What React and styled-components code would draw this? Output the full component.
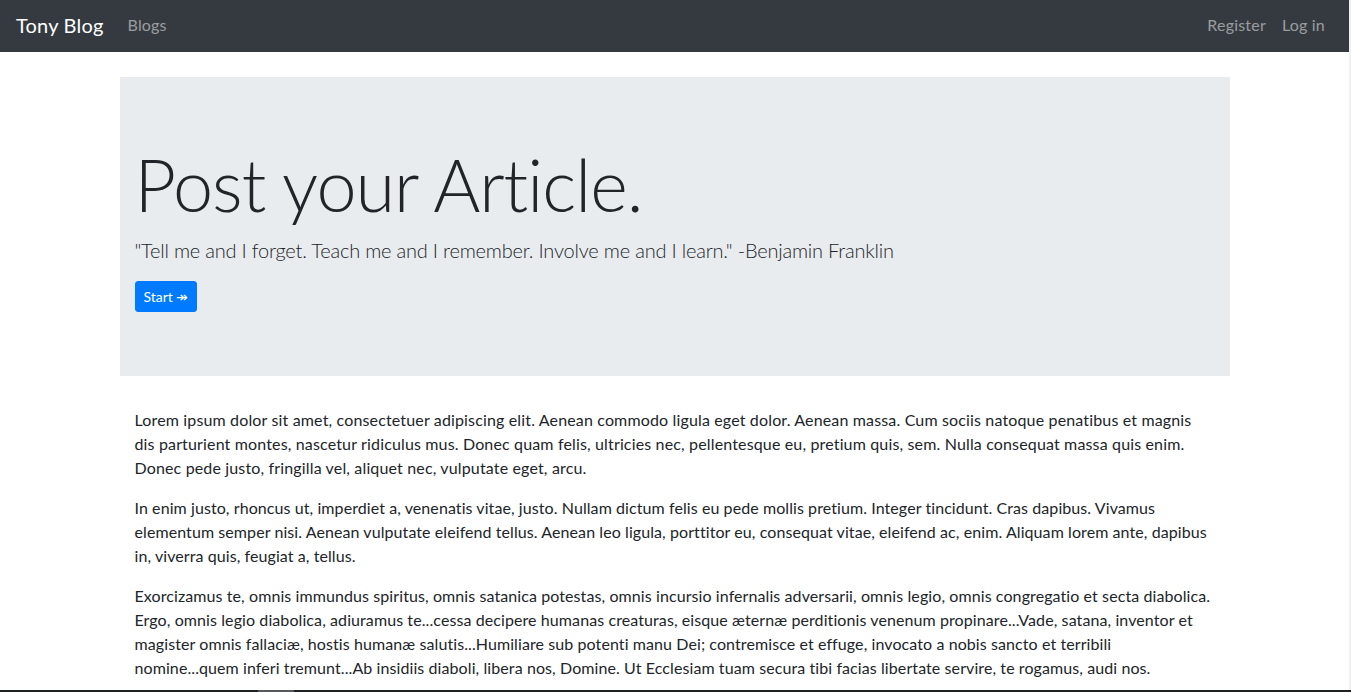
import React from "react";
import styled, { createGlobalStyle } from "styled-components";

const Global = createGlobalStyle`
  * { box-sizing: border-box; }
  html, body { margin: 0; padding: 0; background: #fff; }
  body {
    font-family: Lato, "Liberation Sans", sans-serif;
    font-size: 16px;
    line-height: 1.5;
    color: #212529;
    overflow: hidden;
  }
`;

const Page = styled.div`
  width: 1349px;
  min-height: 692px;
`;

const Navbar = styled.nav`
  height: 52px;
  background: #343a40;
  display: flex;
  align-items: center;
  justify-content: space-between;
  padding: 0 16px 3px;
`;

const NavGroup = styled.div`
  display: flex;
  align-items: center;
`;

const Brand = styled.a`
  color: #fff;
  font-size: 20px;
  line-height: 30px;
  margin-right: 16px;
  text-decoration: none;
  padding: 5px 0;
  letter-spacing: 0.2px;
`;

const NavLink = styled.a`
  color: rgba(255, 255, 255, 0.5);
  font-size: 16px;
  padding: 8px;
  text-decoration: none;
  letter-spacing: 0.2px;
`;

const Container = styled.main`
  width: 1140px;
  margin: 0 auto;
  padding: 25px 15px 0;
`;

const Jumbotron = styled.section`
  background: #e9ecef;
  padding: 64px 15px;
  margin-bottom: 32px;
`;

const Display = styled.h1`
  margin: 0 0 8px;
  font-size: 72px;
  font-weight: 300;
  line-height: 1.2;
  letter-spacing: -1px;
`;

const Lead = styled.p`
  margin: 0 0 16px;
  font-size: 20px;
  font-weight: 300;
  line-height: 30px;
  letter-spacing: -0.2px;
`;

const Button = styled.a`
  display: inline-flex;
  align-items: center;
  height: 31px;
  padding: 0 8px;
  background: #007bff;
  border: 1px solid #007bff;
  border-radius: 3px;
  color: #fff;
  font-size: 14px;
  text-decoration: none;
  vertical-align: top;
`;

const Article = styled.div`
  padding: 0 15px;
`;

const Para = styled.p`
  margin: 0 0 16px;
  font-size: 16px;
  line-height: 24px;
  letter-spacing: ${(p) => p.$tracking ?? 0.05}px;
`;

const EdgeStrip = styled.div`
  position: fixed;
  top: 0;
  right: 0;
  width: 2px;
  height: 100%;
  background: #f0f0f0;
`;

const BottomBar = styled.div`
  position: fixed;
  left: 0;
  right: 0;
  bottom: 0;
  height: 2px;
  background: #202124;
`;

const BottomThumb = styled.div`
  position: absolute;
  left: 258px;
  width: 36px;
  height: 2px;
  background: #55585c;
`;

export default function App() {
  return (
    <>
      <Global />
      <Page>
        <Navbar>
          <NavGroup>
            <Brand href="#">Tony Blog</Brand>
            <NavLink href="#">Blogs</NavLink>
          </NavGroup>
          <NavGroup>
            <NavLink href="#">Register</NavLink>
            <NavLink href="#">Log in</NavLink>
          </NavGroup>
        </Navbar>
        <Container>
          <Jumbotron>
            <Display>Post your Article.</Display>
            <Lead>
              "Tell me and I forget. Teach me and I remember. Involve me and I learn." -Benjamin Franklin
            </Lead>
            <Button href="#">Start ↠</Button>
          </Jumbotron>
          <Article>
            <Para $tracking={0.15}>
              Lorem ipsum dolor sit amet, consectetuer adipiscing elit. Aenean commodo ligula eget dolor. Aenean massa. Cum sociis natoque penatibus et magnis dis parturient montes, nascetur ridiculus mus. Donec quam felis, ultricies nec, pellentesque eu, pretium quis, sem. Nulla consequat massa quis enim. Donec pede justo, fringilla vel, aliquet nec, vulputate eget, arcu.
            </Para>
            <Para $tracking={0.08}>
              In enim justo, rhoncus ut, imperdiet a, venenatis vitae, justo. Nullam dictum felis eu pede mollis pretium. Integer tincidunt. Cras dapibus. Vivamus elementum semper nisi. Aenean vulputate eleifend tellus. Aenean leo ligula, porttitor eu, consequat vitae, eleifend ac, enim. Aliquam lorem ante, dapibus in, viverra quis, feugiat a, tellus.
            </Para>
            <Para $tracking={0.09}>
              Exorcizamus te, omnis immundus spiritus, omnis satanica potestas, omnis incursio infernalis adversarii, omnis legio, omnis congregatio et secta diabolica. Ergo, omnis legio diabolica, adiuramus te...cessa decipere humanas creaturas, eisque æternæ perditionis venenum propinare...Vade, satana, inventor et magister omnis fallaciæ, hostis humanæ salutis...Humiliare sub potenti manu Dei; contremisce et effuge, invocato a nobis sancto et terribili nomine...quem inferi tremunt...Ab insidiis diaboli, libera nos, Domine. Ut Ecclesiam tuam secura tibi facias libertate servire, te rogamus, audi nos.
            </Para>
          </Article>
        </Container>
        <EdgeStrip />
        <BottomBar>
          <BottomThumb />
        </BottomBar>
      </Page>
    </>
  );
}
